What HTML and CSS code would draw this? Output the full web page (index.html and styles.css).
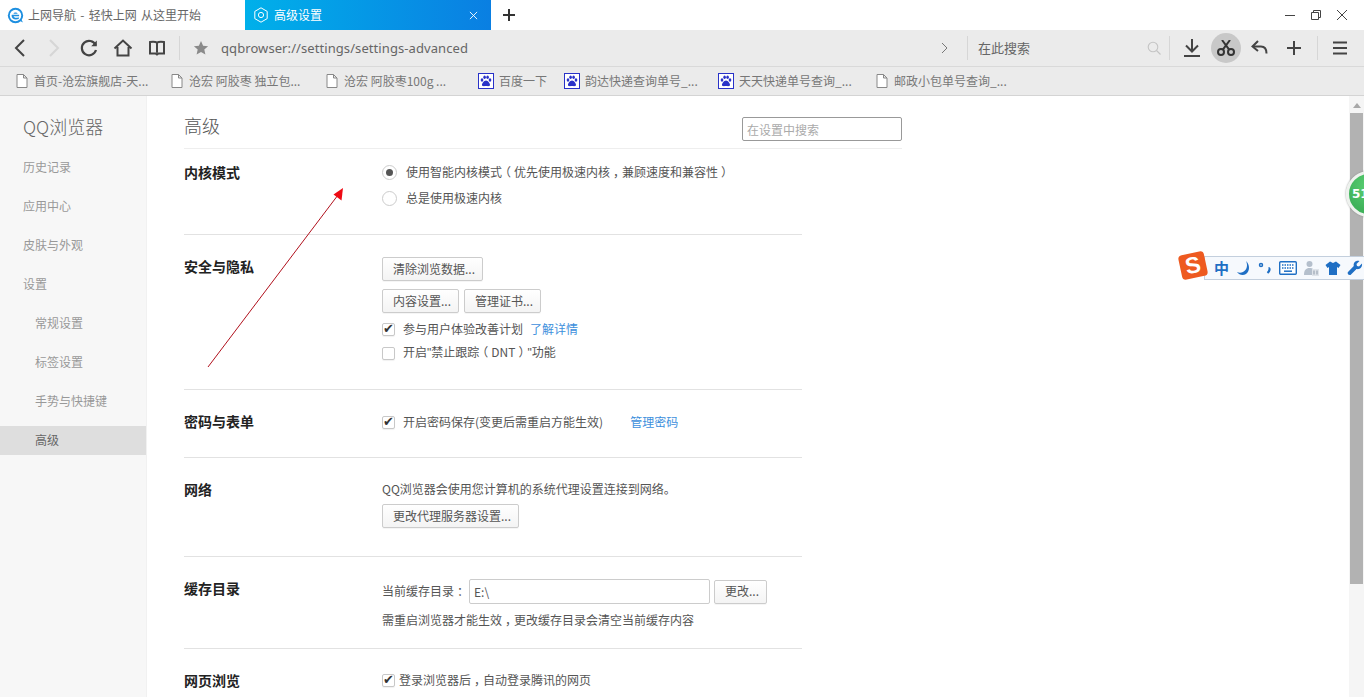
FILE: index.html
```html
<!DOCTYPE html>
<html lang="zh-CN">
<head>
<meta charset="utf-8">
<title>高级设置</title>
<link rel="stylesheet" href="styles.css">
</head>
<body>
<div class="browser">
  <header class="tabbar">
    <div class="tab">
      <svg class="ie" viewBox="0 0 16 16" width="17" height="17"><circle cx="8" cy="8" r="7.200" fill="#1d8fe0"/><circle cx="8" cy="8" r="5.400" fill="#fff"/><path d="M4.600 7.400h6.800v1.400H6.200c.3 1.300 1.900 1.900 4.900.9v1.500c-3.600 1.200-6.800 0-6.800-3 0-.3.1-.5.3-.8zM6 6.400c.7-1.500 3-1.700 4.200 0z" fill="#1d8fe0"/><path d="M12 13l3 1.600-1.500-3z" fill="#1d8fe0"/></svg>
      <span class="tab-name">上网导航 - 轻快上网 从这里开始</span>
    </div>
    <div class="tab tab-active">
      <svg viewBox="0 0 16 16" width="16" height="16" fill="none" stroke="#fff"><path d="M8 .8l6.200 3.600v7.200L8 15.200l-6.200-3.600V4.400z" stroke-linejoin="round"/><circle cx="8" cy="8" r="2.600"/></svg>
      <span class="tab-title">高级设置</span>
      <svg viewBox="0 0 10 10" width="9" height="9" stroke="#fff" stroke-width="1"><path d="M1 1l8 8M9 1l-8 8"/></svg>
    </div>
    <button class="newtab" aria-label="新建标签页"><svg viewBox="0 0 12 12" width="12" height="12" stroke="#333" stroke-width="2"><path d="M6 0v12M0 6h12"/></svg></button>
    <div class="winctl">
      <svg viewBox="0 0 12 12" width="12" height="12" stroke="#444"><path d="M1 6.500h10"/></svg>
      <svg viewBox="0 0 12 12" width="12" height="12" fill="none" stroke="#444"><path d="M1.500 3.500h7v7h-7zM3.500 3.500v-2h7v7h-2"/></svg>
      <svg viewBox="0 0 12 12" width="12" height="12" stroke="#444"><path d="M1 1l10 10M11 1L1 11"/></svg>
    </div>
  </header>

  <nav class="toolbar">
    <span class="tool"><svg viewBox="0 0 20 20" width="20" height="20" fill="none" stroke="#444" stroke-width="2"><path d="M14 2l-8 8 8 8"/></svg></span>
    <span class="tool"><svg viewBox="0 0 20 20" width="20" height="20" fill="none" stroke="#d6d6d6" stroke-width="2"><path d="M6 2l8 8-8 8"/></svg></span>
    <span class="tool tool-nudge"><svg viewBox="0 0 20 20" width="20" height="20" fill="none" stroke="#444" stroke-width="2.200"><path d="M16.600 7A7.200 7.200 0 1 0 17 12"/><path d="M17.800 2.600v5.600h-5.600" fill="#444" stroke="none"/></svg></span>
    <span class="tool"><svg viewBox="0 0 20 20" width="20" height="20" fill="none" stroke="#444" stroke-width="2"><path d="M1.500 10.500L10 2.500l8.500 8M4.500 9v8.500h11V9"/></svg></span>
    <span class="tool"><svg viewBox="0 0 20 20" width="20" height="20" fill="none" stroke="#444" stroke-width="2"><path d="M3 4c3-.5 5.500-.5 7 .8C11.500 3.500 14 3.500 17 4v11.500h-5.500l-1.500 1-1.500-1H3zM10 4.800v10"/></svg></span>
    <i class="sep sep-nav"></i>
    <svg class="star" viewBox="0 0 16 16" width="16" height="16" fill="#8a8a8a"><path d="M8 1l2.100 4.700 5 .5-3.800 3.300 1.100 5L8 11.900 3.600 14.500l1.100-5L.9 6.200l5-.5z"/></svg>
    <span class="url">qqbrowser://settings/settings-advanced</span>
    <svg class="url-go" viewBox="0 0 8 12" width="8" height="12" fill="none" stroke="#777"><path d="M1 1l5 5-5 5"/></svg>
    <i class="sep"></i>
    <span class="search">在此搜索</span>
    <svg class="mag" viewBox="0 0 14 14" width="14" height="14" fill="none" stroke="#c4c4c4" stroke-width="1.100"><circle cx="6" cy="6" r="4.800"/><path d="M9.500 9.500l4 4"/></svg>
    <i class="sep sep-tight"></i>
    <span class="tool"><svg viewBox="0 0 20 20" width="20" height="20" fill="none" stroke="#444" stroke-width="2"><path d="M10 1v12M4 7.500l6 6 6-6M2 18h16"/></svg></span>
    <span class="tool tool-on"><svg viewBox="0 0 18 16" width="18" height="16" fill="none" stroke="#333" stroke-width="2"><circle cx="4" cy="12" r="3"/><circle cx="14" cy="12" r="3"/><path d="M5.800 9.600L13 0M12.200 9.600L5 0"/></svg></span>
    <span class="tool"><svg viewBox="0 0 20 20" width="20" height="20" fill="none" stroke="#444" stroke-width="2"><path d="M8 3L2.500 8.500 8 13"/><path d="M3 8.500h8c3.500 0 5.500 2.500 5.500 7"/></svg></span>
    <span class="tool"><svg viewBox="0 0 16 16" width="16" height="16" stroke="#444" stroke-width="2"><path d="M8 1v14M1 8h14"/></svg></span>
    <i class="sep sep-menu"></i>
    <span class="tool"><svg viewBox="0 0 16 14" width="16" height="14" stroke="#444" stroke-width="2"><path d="M1 1.500h14M1 7h14M1 12.500h14"/></svg></span>
  </nav>

  <div class="bookmarks">
    <a class="bm bm-w1"><svg class="doc" viewBox="0 0 12 14" width="12" height="14"><path d="M1 .5h6.500l3.500 3.500v9.500H1zM7.500.5V4H11"/></svg>首页-沧宏旗舰店-天...</a>
    <a class="bm bm-w1"><svg class="doc" viewBox="0 0 12 14" width="12" height="14"><path d="M1 .5h6.500l3.500 3.500v9.500H1zM7.500.5V4H11"/></svg>沧宏 阿胶枣 独立包...</a>
    <a class="bm bm-w2"><svg class="doc" viewBox="0 0 12 14" width="12" height="14"><path d="M1 .5h6.500l3.500 3.500v9.500H1zM7.500.5V4H11"/></svg>沧宏 阿胶枣100g ...</a>
    <a class="bm bm-w3"><svg viewBox="0 0 16 16" width="16" height="16"><use href="#paw"/></svg>百度一下</a>
    <a class="bm bm-w2b"><svg viewBox="0 0 16 16" width="16" height="16"><use href="#paw"/></svg>韵达快递查询单号_...</a>
    <a class="bm bm-w4"><svg viewBox="0 0 16 16" width="16" height="16"><use href="#paw"/></svg>天天快递单号查询_...</a>
    <a class="bm"><svg class="doc" viewBox="0 0 12 14" width="12" height="14"><path d="M1 .5h6.500l3.500 3.500v9.500H1zM7.500.5V4H11"/></svg>邮政小包单号查询_...</a>
  </div>

  <div class="page">
    <aside class="side">
      <h1 class="brand">QQ浏览器</h1>
      <ul class="menu">
        <li>历史记录</li>
        <li>应用中心</li>
        <li>皮肤与外观</li>
        <li>设置</li>
        <li class="sub">常规设置</li>
        <li class="sub">标签设置</li>
        <li class="sub">手势与快捷键</li>
        <li class="sub on">高级</li>
      </ul>
    </aside>

    <main class="main">
      <div class="head">
        <h2>高级</h2>
        <input class="find" type="text" placeholder="在设置中搜索">
      </div>

      <section class="sec sec-kernel">
        <h3>内核模式</h3>
        <div class="body">
          <label class="row radio-row"><i class="radio radio-on"></i><span>使用智能内核模式<span class="p">（</span>优先使用极速内核<span class="p">，</span>兼顾速度和兼容性<span class="p">）</span></span></label>
          <label class="row radio-row"><i class="radio"></i><span>总是使用极速内核</span></label>
        </div>
      </section>

      <section class="sec sec-privacy">
        <h3>安全与隐私</h3>
        <div class="body">
          <div class="btns"><button class="btn">清除浏览数据...</button></div>
          <div class="btns btns-last"><button class="btn">内容设置...</button><button class="btn">管理证书...</button></div>
          <label class="row"><i class="check check-on"></i><span>参与用户体验改善计划</span><a class="link link-near">了解详情</a></label>
          <label class="row"><i class="check"></i><span>开启<span class="q">"</span>禁止跟踪<span class="p">（</span>DNT<span class="p">）</span><span class="q">"</span>功能</span></label>
        </div>
      </section>

      <section class="sec sec-pass">
        <h3>密码与表单</h3>
        <div class="body">
          <label class="row"><i class="check check-on"></i><span>开启密码保存(变更后需重启方能生效)</span><a class="link link-far">管理密码</a></label>
        </div>
      </section>

      <section class="sec sec-net">
        <h3>网络</h3>
        <div class="body">
          <p class="line">QQ浏览器会使用您计算机的系统代理设置连接到网络。</p>
          <button class="btn">更改代理服务器设置...</button>
        </div>
      </section>

      <section class="sec sec-cache">
        <h3>缓存目录</h3>
        <div class="body">
          <div class="cache-row"><span class="cache-label">当前缓存目录<span class="p">：</span></span><input class="path" type="text" value="E:\"><button class="btn">更改...</button></div>
          <p class="line line-gap">需重启浏览器才能生效<span class="p">，</span>更改缓存目录会清空当前缓存内容</p>
        </div>
      </section>

      <section class="sec sec-web">
        <h3>网页浏览</h3>
        <div class="body">
          <label class="row row-close"><i class="check check-on"></i><span>登录浏览器后<span class="p">，</span>自动登录腾讯的网页</span></label>
        </div>
      </section>
    </main>

    <div class="scrollbar">
      <span class="up"></span>
      <span class="thumb"></span>
    </div>
  </div>

  <svg class="arrow" viewBox="0 0 145 185" width="145" height="185">
    <path d="M3 180L133 8" stroke="#b0101c" fill="none"/>
    <path d="M138 1l-1.500 12.500-8-6z" fill="#ee0a14"/>
  </svg>

  <div class="ball"><span>51</span></div>

  <div class="ime">
    <span class="ime-logo">S</span>
    <div class="ime-bar">
      <span class="ime-zh">中</span>
      <svg viewBox="0 0 16 16" width="16" height="16" fill="#1f6fc4"><path d="M11 1c2 4 1 9-3 11-2 1-4 1-6 0 2 3 6 4 9 2 4-3 4-9 0-13z"/></svg>
      <svg viewBox="0 0 16 16" width="16" height="16" fill="none" stroke="#1f6fc4" stroke-width="1.500"><circle cx="4" cy="5" r="1.500"/><path d="M11.500 8c1.500 0 1.500 3-1 5" stroke-width="2.200"/></svg>
      <svg viewBox="0 0 18 14" width="18" height="14"><rect x=".7" y=".7" width="16.600" height="12.600" rx="1" fill="#fff" stroke="#1f6fc4" stroke-width="1.400"/><path d="M3 4h12M3 7h12" stroke="#1f6fc4" stroke-width="1.500" stroke-dasharray="1.500 1"/><path d="M5 10.200h8" stroke="#1f6fc4" stroke-width="1.500"/></svg>
      <svg viewBox="0 0 16 16" width="16" height="16" fill="#b4bfcc"><circle cx="6.500" cy="4" r="3"/><path d="M1 15c0-5 2-7 5.500-7S10 9 10 10v5z"/><rect x="9" y="9" width="7" height="7" fill="#dfe4ea"/><path d="M11 10.500v4M14 10.500v4" stroke="#8d99a8" fill="none"/></svg>
      <svg viewBox="0 0 16 16" width="16" height="16" fill="#1f6fc4"><path d="M5 1.500l3 1.500 3-1.500L15.500 5l-2 3-1.500-1v8H4V7L2.500 8 .5 5z"/></svg>
      <svg viewBox="0 0 16 16" width="16" height="16" fill="#1f6fc4"><path d="M15 3.500l-3 3-2-.5-.5-2 3-3C9 0 6 2.500 6.800 6L1 12c-1 1 0 3.500 2.500 3l6-6c3.500.8 6-2 5.500-5.500z"/></svg>
    </div>
  </div>
</div>

<svg class="defs" width="0" height="0" aria-hidden="true">
  <symbol id="paw" viewBox="0 0 16 16">
    <rect x=".5" y=".5" width="15" height="15" fill="#fff" stroke="#2932c8"/>
    <g fill="#2932c8"><ellipse cx="4" cy="7" rx="1.300" ry="1.800"/><ellipse cx="6.600" cy="4.200" rx="1.300" ry="1.800"/><ellipse cx="9.600" cy="4.200" rx="1.300" ry="1.800"/><ellipse cx="12" cy="7" rx="1.300" ry="1.800"/><path d="M8 7.500c2 0 4.200 3 4 4.600-.2 1.600-2.500 1-4 1s-3.800.6-4-1c-.2-1.600 2-4.600 4-4.600z"/></g>
  </symbol>
</svg>
</body>
</html>
```

FILE: styles.css
```css
* { box-sizing: border-box; }
html, body { margin: 0; height: 100%; overflow: hidden; }
body {
  font: 12px/1.4 "Noto Sans CJK SC", "Noto Sans", "Liberation Sans", sans-serif;
  color: #555;
  background: #fff;
}
h1, h2, h3, p, ul { margin: 0; padding: 0; font-weight: normal; }
.defs { position: absolute; }
.browser { position: relative; width: 1364px; height: 697px; overflow: hidden; display: flex; flex-direction: column; }

.tabbar { height: 30px; display: flex; align-items: center; background: #fff; flex: none; }
.tab { width: 245px; height: 30px; display: flex; align-items: center; gap: 4px; padding-left: 7px; color: #666; flex: none; }
.tab-name { word-spacing: 1.6px; }
.tab-active { width: 246px; background: linear-gradient(90deg, #00b0ea, #0a7fe2); color: #fff; padding: 0 13px 0 8px; gap: 5px; }
.tab-title { flex: 1; font-size: 12px; }
.newtab { width: 36px; height: 30px; border: 0; background: none; padding: 0; display: flex; align-items: center; justify-content: center; }
.winctl { margin-left: auto; display: flex; gap: 14px; padding-right: 16px; }

.toolbar { height: 37px; background: #ebebeb; border-bottom: 1px solid #d9d9d9; display: flex; align-items: center; padding: 0 7px 0 3px; flex: none; }
.tool { width: 34px; height: 30px; display: flex; align-items: center; justify-content: center; flex: none; }
.tool-nudge { margin-left: 1px; }
.tool-on { background: #c8c8c8; border-radius: 50%; width: 30px; margin: 0 2px; }
.sep { width: 1px; height: 24px; background: #d6d6d6; flex: none; }
.sep-nav { margin-left: 5px; }
.sep-tight { margin: 0 5px 0 0; }
.sep-menu { margin: 0 5px 0 6px; }
.star { margin: 0 12px 0 13px; flex: none; }
.url { flex: 1; font-size: 13px; color: #666; font-family: "Noto Sans", sans-serif; letter-spacing: .08px; }
.url-go { margin-right: 18px; flex: none; }
.search { width: 170px; margin-left: 10px; font-size: 13px; color: #666; flex: none; }
.mag { flex: none; margin-right: 8px; margin-left: -1px; }

.bookmarks { height: 29px; background: #ebebeb; border-bottom: 1px solid #d4d4d4; display: flex; align-items: center; padding-left: 16px; flex: none; }
.bm { display: flex; align-items: center; gap: 6px; color: #777; width: 155px; flex: none; white-space: nowrap; }
.bm-w1 { width: 155px; }
.bm-w2 { width: 152px; }
.bm-w3 { width: 86px; gap: 5px; }
.bm-w2b { width: 154px; gap: 5px; }
.bm-w4 { width: 158px; gap: 5px; }
.doc { fill: #fff; stroke: #888; }

.page { flex: 1; min-height: 0; display: flex; position: relative; }
.side { width: 147px; background: #f7f7f7; border-right: 1px solid #f1f1f1; flex: none; }
.brand { font-size: 18px; font-weight: 300; color: #666; line-height: 28px; padding: 16px 0 0 23px; }
.menu { list-style: none; margin-top: 13px; }
.menu li { height: 29px; margin-bottom: 10px; line-height: 27px; padding-left: 23px; color: #999; }
.menu .sub { padding-left: 35px; }
.menu .on { background: #dedede; color: #666; }

.main { flex: 1; padding-left: 37px; overflow: hidden; min-width: 0; }
.head { width: 718px; height: 53px; border-bottom: 1px solid #eee; display: flex; justify-content: space-between; align-items: center; }
.head h2 { font-size: 18px; font-weight: 300; color: #555; margin-top: 8px; }
.find { width: 160px; height: 24px; border: 1px solid #999; border-radius: 2px; padding: 0 4px; font: inherit; margin-top: 14px; }
.find::placeholder { color: #aaa; }

.sec { width: 618px; display: grid; grid-template-columns: 198px 1fr; border-bottom: 1px solid #e2e2e2; }
.sec h3 { font-size: 14px; font-weight: 700; color: #222; line-height: 20px; margin-top: 21px; }
.sec-kernel h3 { margin-top: 13px; }
.sec-kernel .body { padding: 10px 0 23px; }
.sec-privacy .body { padding: 22px 0 24px; }
.sec-pass .body { padding: 20px 0 23px; }
.sec-net .body { padding: 21px 0 28px; }
.sec-cache .body { padding: 22px 0 18px; }
.sec-web { border-bottom: 0; }
.sec-web .body { padding: 19px 0 20px; }
.row { display: flex; align-items: center; height: 24px; gap: 8px; white-space: nowrap; }
.radio-row { height: 26px; gap: 9px; }
.row-close { gap: 4px; }
.q { font-family: "Liberation Sans", sans-serif; }
.p { font-feature-settings: "halt"; margin: 0 3px; }
.radio { width: 15px; height: 15px; border-radius: 50%; border: 1px solid #ccc; background: #fff; position: relative; flex: none; }
.radio-on::after { content: ""; position: absolute; inset: 3px; border-radius: 50%; background: #555; }
.check { width: 13px; height: 13px; border: 1px solid #c8c8c8; border-radius: 2px; background: #fff; flex: none; position: relative; box-shadow: 0 1px 1px rgba(0,0,0,.06); }
.check-on::after { content: "✔"; position: absolute; left: 0; top: -3px; font: 13px/16px "DejaVu Sans", sans-serif; color: #333; }
.link { color: #3d8fdc; }
.link-near { margin-left: -1px; }
.link-far { margin-left: 19px; }
.btns { display: flex; gap: 5px; margin-bottom: 8px; }
.btns-last { margin-bottom: 4px; }
.btn { height: 24px; padding: 0 7px 0 10px; border: 1px solid #ccc; border-radius: 2px; background: linear-gradient(#fff, #f4f4f4); font: inherit; color: #555; box-shadow: 0 1px 0 rgba(0,0,0,.04); }
.line { line-height: 20px; margin-bottom: 5px; }
.line-gap { margin: 6px 0 0; }
.cache-row { display: flex; align-items: center; gap: 4px; }
.cache-label { white-space: nowrap; flex: none; width: 84px; }
.path { width: 241px; height: 25px; border: 1px solid #ccc; border-radius: 2px; padding: 0 4px; font: inherit; color: #555; margin-left: -1px; flex: none; }

.scrollbar { width: 15px; background: #f5f5f5; flex: none; position: relative; display: flex; flex-direction: column; align-items: center; }
.up { width: 0; height: 0; border: 4px solid transparent; border-top: 0; border-bottom: 5px solid #a8a8a8; margin: 7px 0 5px; }
.thumb { width: 13px; height: 471px; background: #b2b2b2; }

.arrow { position: absolute; left: 205px; top: 187px; }

.ball { position: absolute; left: 1346px; top: 171px; width: 46px; height: 46px; border-radius: 50%; background: radial-gradient(circle at 50% 30%, #5bd074, #3fb25a 70%); border: 3px solid #eef2ee; box-shadow: 0 0 2px #888; color: #fff; font: 700 12px/40px "DejaVu Sans", sans-serif; padding-left: 3px; }

.ime { position: absolute; left: 1180px; top: 255px; display: flex; align-items: center; }
.ime-logo { width: 26px; height: 25px; border-radius: 4px; background: #ee5a20; color: #fff; font: 700 23px/25px "Liberation Sans", sans-serif; text-align: center; transform: translateY(-2px) rotate(-12deg); position: relative; z-index: 1; flex: none; }
.ime-bar { width: 160px; height: 24px; margin-left: -2px; background: #f6f9fd; border: 1px solid #c3cfdd; border-right: 0; display: flex; align-items: center; gap: 6px; padding-left: 9px; flex: none; }
.ime-zh { color: #1f6fc4; font-size: 15px; font-weight: 700; line-height: 20px; }
```
